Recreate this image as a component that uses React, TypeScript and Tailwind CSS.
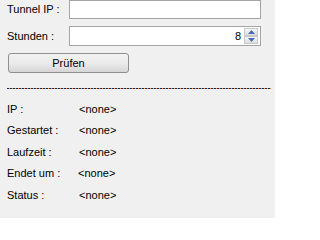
import React from "react";

const rows = [
  { label: "IP :", value: "<none>", w: "w-[72px]" },
  { label: "Gestartet :", value: "<none>", w: "w-[72px]" },
  { label: "Laufzeit :", value: "<none>", w: "w-[72px]" },
  { label: "Endet um :", value: "<none>", w: "w-[71px]" },
  { label: "Status :", value: "<none>", w: "w-[72px]" },
];

function SpinArrow({ up }: { up?: boolean }) {
  return (
    <div className="flex h-[8px] w-[14px] items-center justify-center border border-[#c8c8c8] bg-gradient-to-b from-[#f6f6f6] to-[#dedede]">
      <svg width="7" height="4" viewBox="0 0 7 4">
        {up ? <path d="M0 4 L3.5 0 L7 4 Z" fill="#4a6ab8" /> : <path d="M0 0 L3.5 4 L7 0 Z" fill="#4a6ab8" />}
      </svg>
    </div>
  );
}

export default function App() {
  return (
    <div className="w-[275px] h-[218px] bg-[#f0f0f0] text-[11px] text-black font-['Liberation_Sans',sans-serif] overflow-hidden">
      <div className="flex h-[19px] items-center">
        <span className="w-[69px] pl-[7px]">Tunnel IP :</span>
        <div className="h-[19px] w-[192px] border border-[#a5a5a5] bg-white" />
      </div>

      <div className="mt-[7px] flex h-[20px] items-center">
        <span className="w-[69px] pl-[7px]">Stunden :</span>
        <div className="flex h-[20px] w-[192px] items-center justify-end border border-[#a5a5a5] bg-white pr-[2px]">
          <span className="mr-[3px]">8</span>
          <div className="flex flex-col gap-0">
            <SpinArrow up />
            <SpinArrow />
          </div>
        </div>
      </div>

      <div className="mt-[7px] pl-[8px]">
        <button className="flex h-[20px] w-[121px] items-center justify-center rounded-[3px] border border-[#8f8f8f] bg-gradient-to-b from-[#f2f2f2] via-[#ebebeb] to-[#d6d6d6] text-[11px] text-black">
          Prüfen
        </button>
      </div>

      <div className="ml-[7px] mr-[4px] mt-[15px] h-px bg-[repeating-linear-gradient(90deg,#1c2450_0px,#1c2450_2px,#f0a040_2px,#f0a040_3px)]" />

      <div className="mt-[9px] flex flex-col">
        {rows.map((r) => (
          <div key={r.label} className="flex h-[21.5px] items-center pl-[7px]">
            <span className={`${r.w} shrink-0`}>{r.label}</span>
            <span>{r.value}</span>
          </div>
        ))}
      </div>
    </div>
  );
}
